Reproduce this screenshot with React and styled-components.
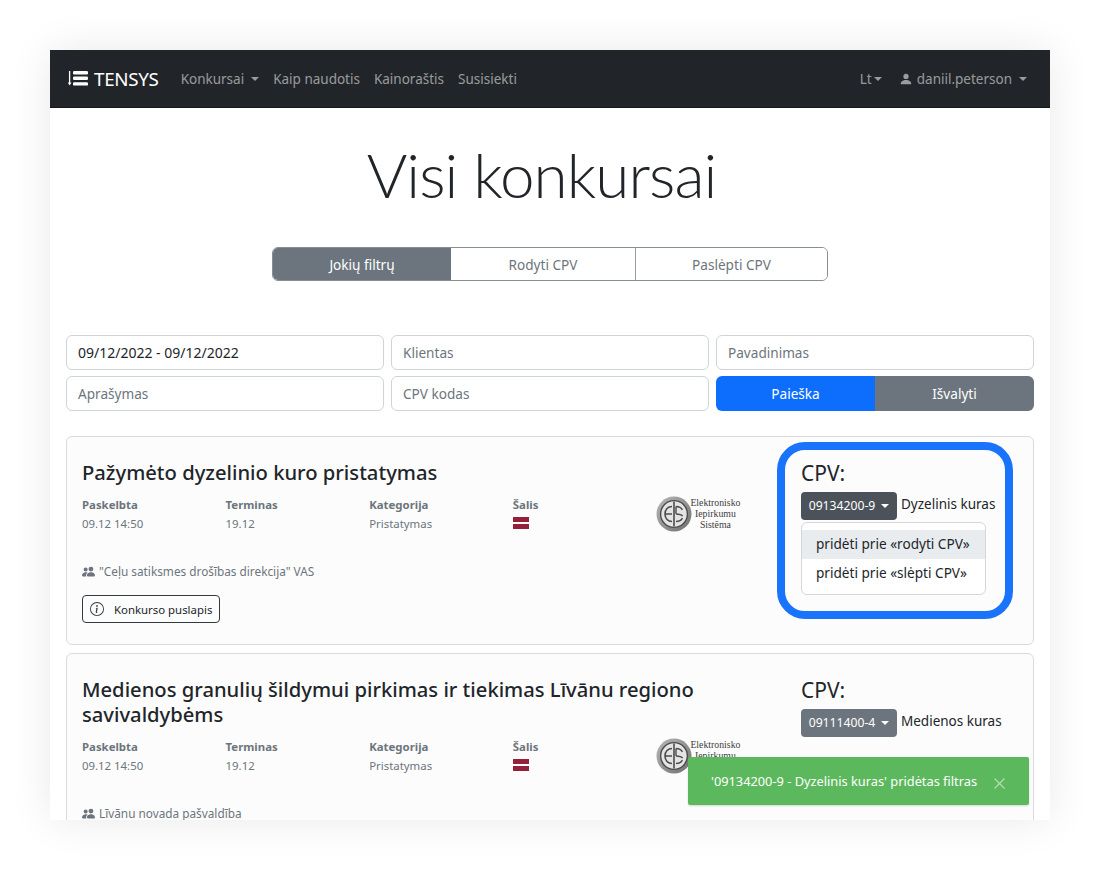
import React from 'react'
import styled, { createGlobalStyle } from 'styled-components'
import { BsPeopleFill, BsPersonFill, BsInfoCircle } from 'react-icons/bs'

const GlobalStyle = createGlobalStyle`
  html, body { margin: 0; padding: 0; background: #fff; }
  body { font-family: "Noto Sans", "Open Sans", sans-serif; color: #212529; }
  * { box-sizing: border-box; }
`

const Frame = styled.div`
  position: relative;
  width: 1000px;
  height: 770px;
  margin: 50px;
  overflow: hidden;
  background: #fff;
  box-shadow: 0 0 40px rgba(0, 0, 0, 0.09);
`

const Navbar = styled.nav`
  display: flex;
  align-items: center;
  height: 58px;
  padding: 0 23px 0 17px;
  background: #212529;
  border-bottom: 1px solid #15181b;
`

const Brand = styled.div`
  display: flex;
  align-items: center;
  gap: 5px;
  margin-right: 22px;
  color: #fff;
  font-size: 18.8px;
  font-weight: 400;
  letter-spacing: -0.3px;
`

const NavLink = styled.a`
  display: inline-flex;
  align-items: center;
  margin-right: ${(p) => p.$gap ?? 14}px;
  color: rgba(255, 255, 255, 0.55);
  font-size: 13.5px;
  white-space: nowrap;
`

const Spacer = styled.div`
  flex: 1;
`

const Caret = styled.span`
  display: inline-block;
  margin-left: ${(p) => p.$gap ?? 7}px;
  border-top: 4.5px solid ${(p) => p.$color || 'currentColor'};
  border-left: 4.5px solid transparent;
  border-right: 4.5px solid transparent;
`

const UserIcon = styled(BsPersonFill)`
  margin-right: 4px;
  font-size: 14px;
`

const Content = styled.main`
  padding: 0 16px;
`

const Title = styled.h1`
  margin: 30px 0 0;
  height: 82px;
  padding-right: 17px;
  text-align: center;
  font-family: "Lato", "Open Sans", sans-serif;
  font-size: 62px;
  line-height: 72px;
  font-weight: 300;
  letter-spacing: -0.95px;
  color: #212529;
`

const Tabs = styled.div`
  display: flex;
  width: 556px;
  height: 34px;
  margin: 27px auto 54px;
  border: 1px solid #868e96;
  border-radius: 6px;
  overflow: hidden;
`

const Tab = styled.div`
  display: flex;
  align-items: center;
  justify-content: center;
  width: ${(p) => p.$width}px;
  flex: none;
  background: ${(p) => (p.$active ? '#6c757d' : '#fff')};
  color: ${(p) => (p.$active ? '#fff' : '#6c757d')};
  border-left: ${(p) => (p.$divider ? '1px solid #9aa0a6' : 'none')};
  font-size: 13.6px;
`

const FilterGrid = styled.div`
  display: grid;
  grid-template-columns: repeat(3, 1fr);
  gap: 6px 7px;
  margin-bottom: 25px;
`

const Field = styled.div`
  display: flex;
  align-items: center;
  height: 35px;
  padding: 0 11px;
  border: 1px solid #ced4da;
  border-radius: 6px;
  background: #fff;
  color: ${(p) => (p.$filled ? '#212529' : '#6c757d')};
  font-size: ${(p) => (p.$filled ? 14 : 13.6)}px;
`

const ButtonPair = styled.div`
  display: grid;
  grid-template-columns: 159px 159px;
  border-radius: 6px;
  overflow: hidden;
`

const ActionButton = styled.div`
  display: flex;
  align-items: center;
  justify-content: center;
  background: ${(p) => p.$bg};
  color: #fff;
  font-size: 13.6px;
`

const Card = styled.section`
  display: grid;
  grid-template-columns: 1fr 236px;
  align-items: start;
  min-height: 209px;
  margin-bottom: 8px;
  padding: 5px 20px 21px 15px;
  background: #fcfcfc;
  border: 1px solid #d9dbdd;
  border-radius: 6px;
`

const CardMain = styled.div`
  padding-top: 18px;
`

const CardTitle = styled.h2`
  width: 640px;
  margin: 0 0 12px;
  font-size: 20.2px;
  line-height: 25px;
  font-weight: 500;
  color: #212529;
`

const MetaRow = styled.div`
  display: grid;
  grid-template-columns: repeat(4, 143.6px) 90px;
  height: 66px;
`

const MetaColumn = styled.div`
  display: flex;
  flex-direction: column;
  gap: 3px;
  color: #6c757d;
  font-size: 11.4px;
  line-height: 16px;
`

const MetaLabel = styled.strong`
  font-weight: 700;
`

const Flag = styled.svg`
  display: block;
  width: 16px;
  height: 12px;
  margin-top: 1px;
`

const LogoBlock = styled.div`
  display: flex;
  margin-top: -1px;
`

const LogoText = styled.div`
  margin-left: -2px;
  padding-top: 1px;
  font-family: "Liberation Serif", serif;
  font-size: 9.8px;
  line-height: 11px;
  text-align: center;
  color: #3c3c3c;
`

const Client = styled.div`
  display: flex;
  align-items: center;
  gap: 4px;
  height: 16px;
  color: #6c757d;
  font-size: 11.8px;
`

const OutlineButton = styled.div`
  display: inline-flex;
  align-items: center;
  height: 28px;
  margin-top: 16px;
  padding: 0 7px;
  border: 1px solid #343a40;
  border-radius: 4px;
  color: #212529;
  font-size: 11.4px;
`

const InfoIcon = styled(BsInfoCircle)`
  margin-right: 10px;
  font-size: 14px;
  color: #343a40;
`

const CpvBox = styled.div`
  padding: 8px 16px 16px;
  border: 8px solid ${(p) => (p.$highlight ? '#1a73fb' : 'transparent')};
  border-radius: 28px;
`

const CpvTitle = styled.div`
  font-size: 21px;
  line-height: 30px;
  color: #212529;
`

const CpvRow = styled.div`
  display: flex;
  align-items: flex-start;
  gap: 4px;
  margin-top: 4px;
  white-space: nowrap;
  color: #212529;
  font-size: 13.5px;
  line-height: 24px;
`

const CpvButton = styled.div`
  display: inline-flex;
  align-items: center;
  justify-content: center;
  flex: none;
  width: 96px;
  height: 28px;
  border-radius: 4px;
  background: ${(p) => (p.$open ? '#4b5259' : '#6c757d')};
  color: #fff;
  font-size: 12.2px;
`

const Menu = styled.div`
  width: 185px;
  margin-top: 2px;
  padding: 7px 0;
  border: 1px solid #d5d7d9;
  border-radius: 6px;
  background: #fff;
`

const MenuItem = styled.div`
  height: 28.5px;
  padding: 0 14px;
  background: ${(p) => (p.$hover ? '#e9ecef' : 'transparent')};
  color: #212529;
  font-size: 13.6px;
  line-height: 28.5px;
  white-space: nowrap;
`

const Toast = styled.div`
  position: absolute;
  right: 21px;
  bottom: 15px;
  display: flex;
  align-items: center;
  justify-content: space-between;
  width: 341px;
  height: 48px;
  padding: 0 24px 0 23px;
  border-radius: 2px;
  background: #5cb85c;
  box-shadow: 0 1px 2px rgba(0, 0, 0, 0.15);
  color: #fff;
  font-size: 12.8px;
  white-space: nowrap;
`

const ToastClose = styled.svg`
  width: 11px;
  height: 11px;
  margin-top: 4px;
`

const TensysMark = () => (
  <svg width="22" height="17" viewBox="0 0 22 17" fill="none">
    <path d="M2.6 1v12.5" stroke="#fff" strokeWidth="1.3" />
    <path d="M0.8 12.6L2.6 15.4L4.4 12.6z" fill="#fff" />
    <rect x="6" y="1" width="15" height="3.4" rx="1.2" fill="#fff" />
    <rect x="6" y="6.6" width="15" height="3.4" rx="1.2" fill="#fff" />
    <rect x="6" y="12.2" width="15" height="3.4" rx="1.2" fill="#fff" />
  </svg>
)

const EisLogo = ({ id }) => (
  <svg width="36" height="36" viewBox="0 0 36 36" fill="none">
    <defs>
      <linearGradient id={id} x1="0" y1="0" x2="1" y2="1">
        <stop offset="0" stopColor="#b8b8b8" />
        <stop offset="1" stopColor="#6f6f6f" />
      </linearGradient>
    </defs>
    <circle cx="18" cy="18" r="17.5" fill={`url(#${id})`} />
    <circle cx="18" cy="18" r="13.4" fill="#e4e4e4" stroke="#4c4c4c" strokeWidth="1.4" />
    <path d="M18 5.5v25" stroke="#4c4c4c" strokeWidth="1.6" />
    <path d="M16 10.5c-4 0-7 3-7 7.5s3 7.5 7 7.5M9.5 18H16" stroke="#4c4c4c" strokeWidth="1.6" />
    <path d="M20 10.5c3.4 0 5.5 1.4 6.4 3.4M20 18c3 0 5.5 .3 6.6 2.2M20 25.5c3.4 0 5.5-1.4 6.4-3.4M20 10.5v7.5" stroke="#4c4c4c" strokeWidth="1.4" />
  </svg>
)

const LatviaFlag = () => (
  <Flag viewBox="0 0 16 12">
    <rect width="16" height="12" fill="#96203c" />
    <rect y="5" width="16" height="2" fill="#fff" />
  </Flag>
)

const TENDERS = [
  {
    title: 'Pažymėto dyzelinio kuro pristatymas',
    client: '"Ceļu satiksmes drošības direkcija" VAS',
    code: '09134200-9',
    cpv: 'Dyzelinis kuras',
    open: true,
  },
  {
    title: 'Medienos granulių šildymui pirkimas ir tiekimas Līvānu regiono savivaldybėms',
    client: 'Līvānu novada pašvaldība',
    code: '09111400-4',
    cpv: 'Medienos kuras',
    open: false,
  },
]

function TenderCard({ tender }) {
  return (
    <Card>
      <CardMain>
        <CardTitle>{tender.title}</CardTitle>
        <MetaRow>
          <MetaColumn>
            <MetaLabel>Paskelbta</MetaLabel>
            <span>09.12 14:50</span>
          </MetaColumn>
          <MetaColumn>
            <MetaLabel>Terminas</MetaLabel>
            <span>19.12</span>
          </MetaColumn>
          <MetaColumn>
            <MetaLabel>Kategorija</MetaLabel>
            <span>Pristatymas</span>
          </MetaColumn>
          <MetaColumn>
            <MetaLabel>Šalis</MetaLabel>
            <LatviaFlag />
          </MetaColumn>
          <LogoBlock>
            <EisLogo id={`ring-${tender.code}`} />
            <LogoText>
              Elektronisko
              <br />
              Iepirkumu
              <br />
              Sistēma
            </LogoText>
          </LogoBlock>
        </MetaRow>
        <Client>
          <BsPeopleFill size={13} />
          {tender.client}
        </Client>
        <OutlineButton>
          <InfoIcon />
          Konkurso puslapis
        </OutlineButton>
      </CardMain>
      <CpvBox $highlight={tender.open}>
        <CpvTitle>CPV:</CpvTitle>
        <CpvRow>
          <CpvButton $open={tender.open}>
            {tender.code}
            <Caret $gap={6} />
          </CpvButton>
          {tender.cpv}
        </CpvRow>
        {tender.open && (
          <Menu>
            <MenuItem $hover>pridėti prie «rodyti CPV»</MenuItem>
            <MenuItem>pridėti prie «slėpti CPV»</MenuItem>
          </Menu>
        )}
      </CpvBox>
    </Card>
  )
}

export default function App() {
  return (
    <>
      <GlobalStyle />
      <Frame>
        <Navbar>
          <Brand>
            <TensysMark />
            TENSYS
          </Brand>
          <NavLink $gap={14}>
            Konkursai
            <Caret />
          </NavLink>
          <NavLink>Kaip naudotis</NavLink>
          <NavLink>Kainoraštis</NavLink>
          <NavLink>Susisiekti</NavLink>
          <Spacer />
          <NavLink $gap={17}>
            Lt
            <Caret $gap={2} />
          </NavLink>
          <NavLink $gap={0}>
            <UserIcon />
            daniil.peterson
            <Caret />
          </NavLink>
        </Navbar>
        <Content>
          <Title>Visi konkursai</Title>
          <Tabs>
            <Tab $width={178} $active>Jokių filtrų</Tab>
            <Tab $width={184}>Rodyti CPV</Tab>
            <Tab $width={192} $divider>Paslėpti CPV</Tab>
          </Tabs>
          <FilterGrid>
            <Field $filled>09/12/2022 - 09/12/2022</Field>
            <Field>Klientas</Field>
            <Field>Pavadinimas</Field>
            <Field>Aprašymas</Field>
            <Field>CPV kodas</Field>
            <ButtonPair>
              <ActionButton $bg="#0d6efd">Paieška</ActionButton>
              <ActionButton $bg="#6c757d">Išvalyti</ActionButton>
            </ButtonPair>
          </FilterGrid>
          {TENDERS.map((tender) => (
            <TenderCard key={tender.code} tender={tender} />
          ))}
        </Content>
        <Toast>
          '09134200-9 - Dyzelinis kuras' pridėtas filtras
          <ToastClose viewBox="0 0 11 11">
            <path d="M0.5 0.5L10.5 10.5M10.5 0.5L0.5 10.5" stroke="#fff" strokeOpacity="0.55" strokeWidth="1.1" />
          </ToastClose>
        </Toast>
      </Frame>
    </>
  )
}
